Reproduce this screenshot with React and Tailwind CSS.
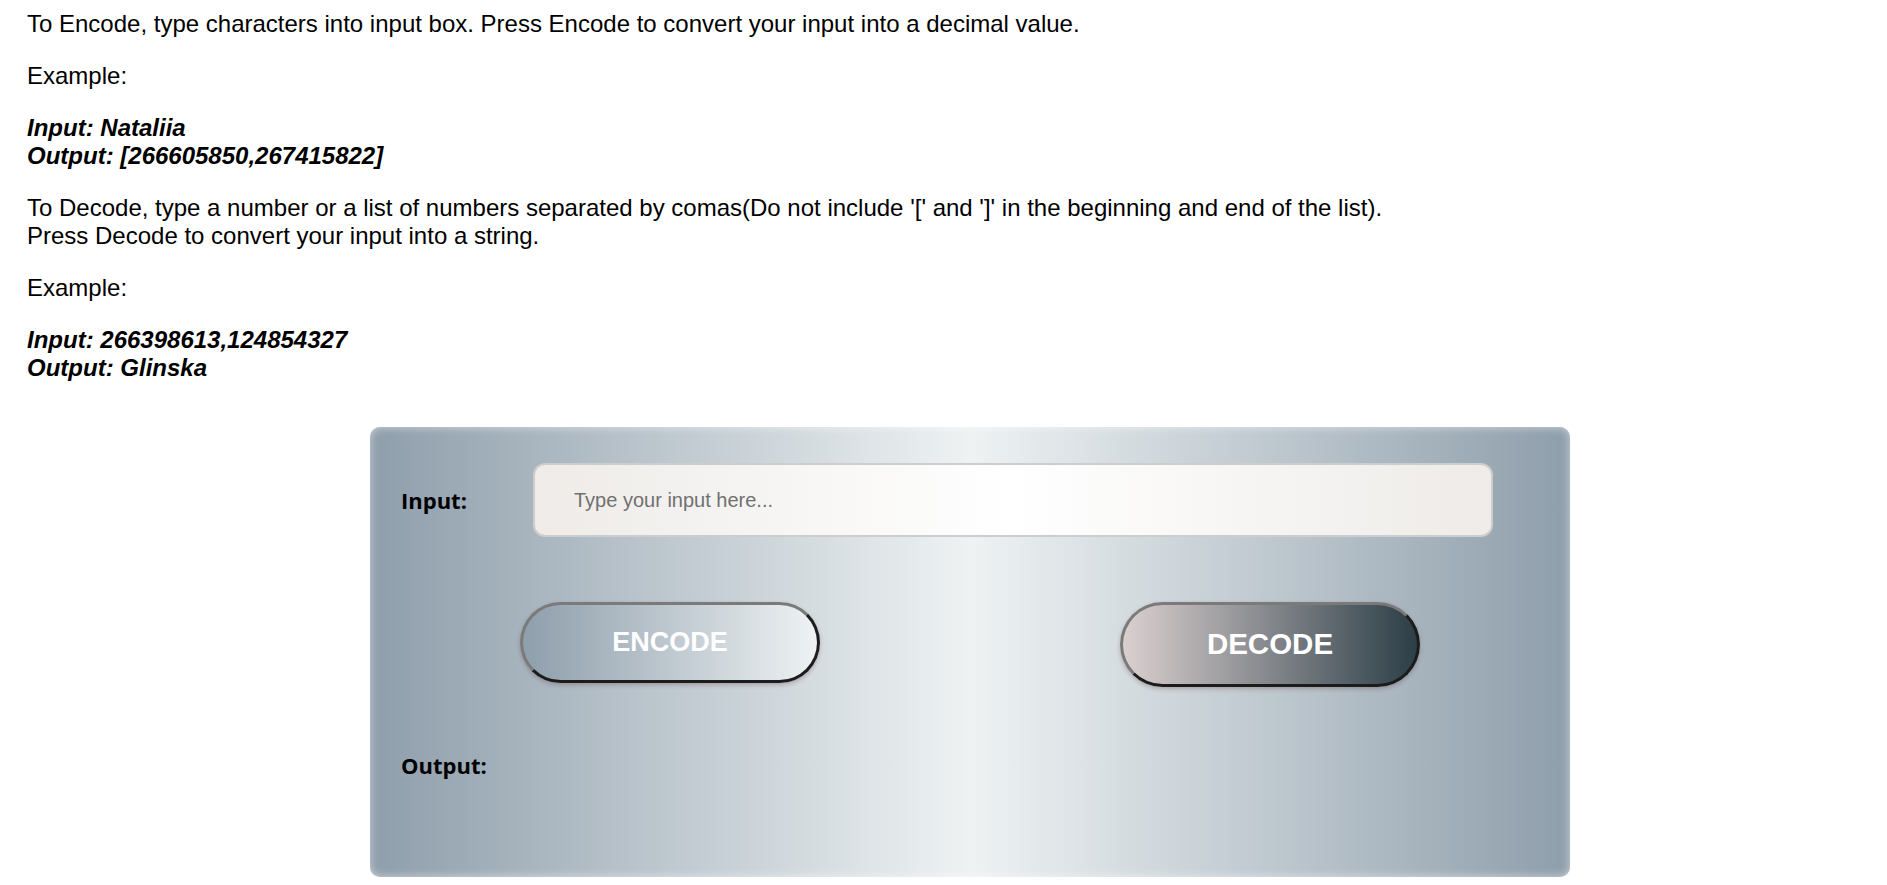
export default function App() {
  return (
    <div className="min-h-screen bg-white font-['Liberation_Sans',Arial,sans-serif] text-black">
      <div className="pl-[27px] pt-[10px] text-[24px] leading-[28px]">
        <p className="mb-[24px]">
          To Encode, type characters into input box. Press Encode to convert your input into a decimal value.
        </p>
        <p className="mb-[24px]">Example:</p>
        <p className="mb-[24px] font-bold italic">
          Input: Nataliia
          <br />
          Output: [266605850,267415822]
        </p>
        <p className="mb-[24px]">
          To Decode, type a number or a list of numbers separated by comas(Do not include '[' and ']' in the beginning
          and end of the list).
          <br />
          Press Decode to convert your input into a string.
        </p>
        <p className="mb-[24px]">Example:</p>
        <p className="font-bold italic">
          Input: 266398613,124854327
          <br />
          Output: Glinska
        </p>
      </div>

      <div className="ml-[370px] mt-[45px] h-[450px] w-[1200px] rounded-[10px] bg-[linear-gradient(to_right,#8e9eab,#eef2f3,#8e9eab)] shadow-[inset_0_0_10px_rgba(255,255,255,0.55)]">
        <div className="flex items-center px-[31px] pt-[36px]">
          <label className="w-[132px] font-['Open_Sans',sans-serif] text-[22px] font-bold">Input:</label>
          <input
            type="text"
            placeholder="Type your input here..."
            className="h-[74px] w-[960px] rounded-[12px] border-2 border-[#cdcdcd] bg-[linear-gradient(to_right,#eeebe8,#ffffff,#eeebe8)] pl-[39px] font-['Liberation_Sans',Arial,sans-serif] text-[20px] text-black outline-none placeholder:text-[#707070]"
          />
        </div>

        <div className="mt-[65px] grid grid-cols-2 items-start">
          <div className="flex justify-center">
            <button className="h-[81px] w-[300px] rounded-full border-[3px] border-b-[#1c1c1c] border-l-[#7a7a7a] border-r-[#1c1c1c] border-t-[#7a7a7a] bg-[linear-gradient(to_right,#8e9eab,#eef2f3)] text-[27px] font-bold text-white shadow-[0_2px_4px_rgba(90,50,50,0.3)]">
              ENCODE
            </button>
          </div>
          <div className="flex justify-center">
            <button className="h-[85px] w-[300px] rounded-full border-[3px] border-b-[#1c1c1c] border-l-[#7a7a7a] border-r-[#1c1c1c] border-t-[#7a7a7a] bg-[linear-gradient(to_right,#dbd0d0,#2c3e47)] text-[29.5px] font-bold text-white shadow-[0_2px_4px_rgba(90,50,50,0.3)]">
              DECODE
            </button>
          </div>
        </div>

        <div className="mt-[63px] px-[31px]">
          <div className="font-['Open_Sans',sans-serif] text-[22px] font-bold leading-[30px]">Output:</div>
        </div>
      </div>
    </div>
  );
}
